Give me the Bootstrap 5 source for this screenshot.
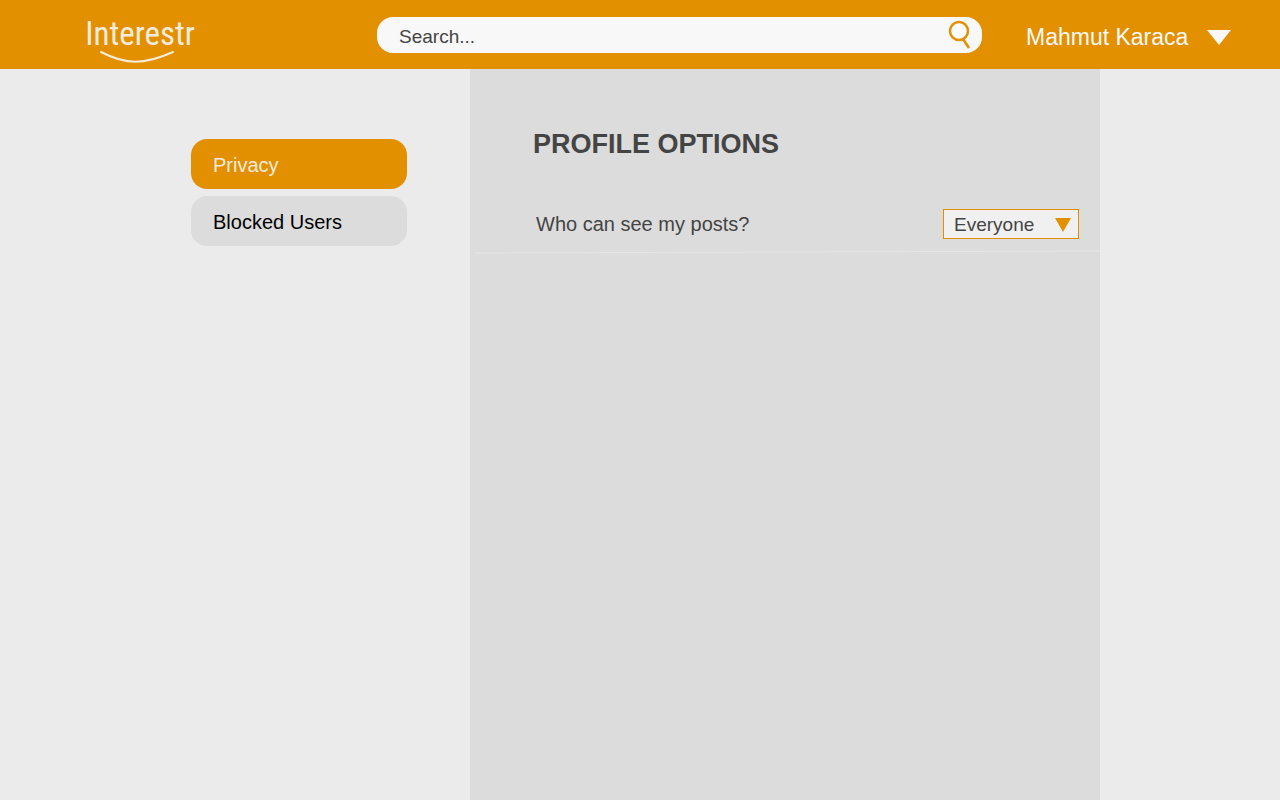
<!DOCTYPE html>
<html lang="en">
<head>
<meta charset="utf-8">
<meta name="viewport" content="width=device-width, initial-scale=1">
<title>Interestr – Profile options</title>
<link href="https://cdn.jsdelivr.net/npm/bootstrap@5.3.0/dist/css/bootstrap.min.css" rel="stylesheet">
<style>
  :root { --brand: #e29000; --ink: #444; --panel: #dcdcdc; }
  body { background: #ebebeb; color: var(--ink); font-family: "Liberation Sans", Arial, sans-serif; font-size: 20px; line-height: 24px; }
  .topbar { display: grid; grid-template-columns: 377fr 605fr 298fr; height: 69px; background: var(--brand); }
  .brand-link { width: 108px; margin-left: 86px; padding-top: 8px; color: #f3ebdd; }
  .brand-word { font-family: "Roboto Condensed", "Liberation Sans", sans-serif; font-size: 33px; line-height: 40px; }
  .brand-smile { width: 76px; height: 14px; margin: -4px 6px 0 0; }
  .search-box { height: 36px; border-radius: 16px; background: #f8f8f8; }
  .search-box .form-control { padding: 5px 22px 0; font-size: 19px; color: var(--ink); }
  .search-box .form-control::placeholder { color: var(--ink); opacity: 1; }
  .search-box .btn { padding: 0 11px 0 0; }
  .user-menu { padding: 6px 49px 0 44px; font-size: 23px; color: #f8f8f8 !important; }
  .page-grid { display: grid; grid-template-columns: 470fr 630fr 180fr; }
  .side-nav { padding: 70px 63px 0 0; gap: 7px; }
  .side-nav .nav-link { width: 216px; height: 50px; padding: 2px 22px 0; border-radius: 16px; background: var(--panel); color: #000; }
  .side-nav .nav-link.active { background: var(--brand); color: #f3ebdd; }
  .options-panel { background: var(--panel); padding-top: 60px; }
  .options-title { margin: 0 63px 50px; font-size: 27px; line-height: 30px; }
  .option-row { padding: 0 21px 0 66px; }
  .form-select.audience { width: 136px; height: 30px; padding: 2px 26px 0 10px; border: 1px solid var(--brand); border-radius: 0; font-size: 19px; line-height: 24px; color: var(--ink); background-color: #f0f0f0; background-position: right 7px top 8px; background-size: 16px 14px;
    background-image: url("data:image/svg+xml,%3csvg xmlns='http://www.w3.org/2000/svg' viewBox='0 0 16 14'%3e%3cpath fill='%23e29000' d='M0 0h16L8 14z'/%3e%3c/svg%3e"); }
  .option-rule { width: 100%; height: 4px; margin-top: 11px; padding-left: 5px; }
</style>
</head>
<body class="d-flex flex-column min-vh-100">
<header class="topbar align-items-center">
  <a class="brand-link d-flex flex-column align-items-center text-decoration-none" href="#" aria-label="Interestr">
    <span class="brand-word">Interestr</span>
    <svg class="brand-smile" viewBox="0 0 76 14" aria-hidden="true"><path d="M2 2C27 15 45 15 74 2" fill="none" stroke="currentColor" stroke-width="2" stroke-linecap="round"/></svg>
  </a>
  <form class="search-box d-flex align-items-center" role="search">
    <input class="form-control border-0 bg-transparent shadow-none" type="search" placeholder="Search..." aria-label="Search">
    <button class="btn border-0" type="button" aria-label="Search">
      <svg class="d-block" width="24" height="30" viewBox="0 0 24 30" fill="none" stroke="#e29000" stroke-width="2.5"><path d="M16 19l6 9"/><circle cx="12" cy="11" r="9" fill="#fff"/></svg>
    </button>
  </form>
  <button class="user-menu btn border-0 d-flex align-items-center justify-content-between text-nowrap" type="button">
    Mahmut Karaca
    <svg width="24" height="15" viewBox="0 0 24 15" aria-hidden="true"><path d="M0 0h24L12 15z" fill="#f8f8f8"/></svg>
  </button>
</header>
<div class="page-grid flex-grow-1">
  <nav class="side-nav nav flex-column align-items-end" aria-label="Settings">
    <a class="nav-link active d-flex align-items-center" href="#" aria-current="page">Privacy</a>
    <a class="nav-link d-flex align-items-center" href="#">Blocked Users</a>
  </nav>
  <main class="options-panel">
    <h1 class="options-title fw-bold">PROFILE OPTIONS</h1>
    <div class="option-row d-flex align-items-center justify-content-between">
      <label for="audience">Who can see my posts?</label>
      <select class="form-select audience" id="audience"><option>Everyone</option><option>Friends</option><option>Only me</option></select>
    </div>
    <svg class="option-rule d-block" viewBox="0 0 625 4" preserveAspectRatio="none" aria-hidden="true"><path d="M0 3L625 1" stroke="#e6e6e6" stroke-width="1"/></svg>
  </main>
</div>
<script src="https://cdn.jsdelivr.net/npm/bootstrap@5.3.0/dist/js/bootstrap.bundle.min.js"></script>
</body>
</html>
